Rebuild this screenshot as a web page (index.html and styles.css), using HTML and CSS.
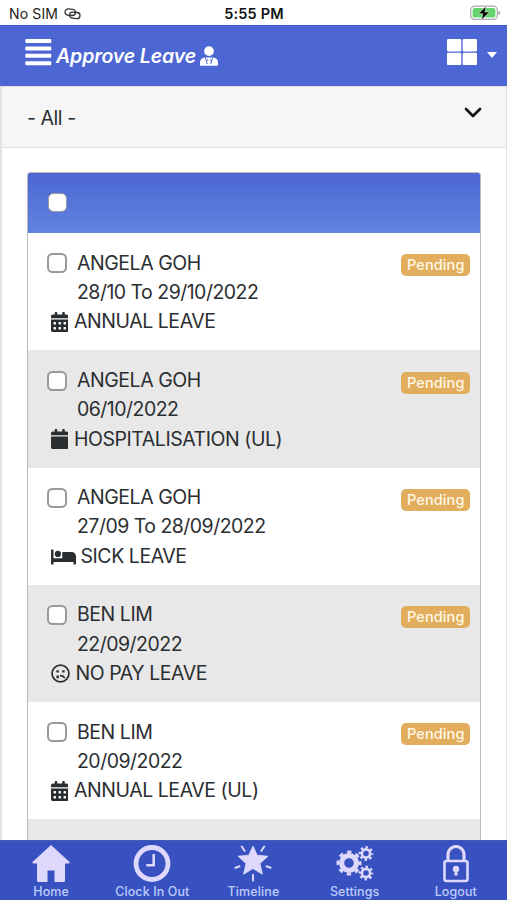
FILE: index.html
```html
<!DOCTYPE html>
<html lang="en">
<head>
<meta charset="utf-8">
<title>Approve Leave</title>
<link rel="stylesheet" href="styles.css">
</head>
<body>
<svg class="defs" aria-hidden="true">
  <symbol id="cal" viewBox="0 0 448 512"><path d="M0 464c0 26 22 48 48 48h352c26 0 48-22 48-48V192H0zm320-196q0-12 12-12h40q12 0 12 12v40q0 12-12 12h-40q-12 0-12-12zm0 128q0-12 12-12h40q12 0 12 12v40q0 12-12 12h-40q-12 0-12-12zM192 268q0-12 12-12h40q12 0 12 12v40q0 12-12 12h-40q-12 0-12-12zm0 128q0-12 12-12h40q12 0 12 12v40q0 12-12 12h-40q-12 0-12-12zM64 268q0-12 12-12h40q12 0 12 12v40q0 12-12 12H76q-12 0-12-12zm0 128q0-12 12-12h40q12 0 12 12v40q0 12-12 12H76q-12 0-12-12zM400 64h-48V16c0-9-7-16-16-16h-32c-9 0-16 7-16 16v48H160V16c0-9-7-16-16-16h-32c-9 0-16 7-16 16v48H48C22 64 0 86 0 112v48h448v-48c0-26-22-48-48-48z" fill-rule="evenodd"/></symbol>
  <symbol id="calsolid" viewBox="0 0 448 512"><path d="M12 192h424q12 0 12 12v260c0 26-22 48-48 48H48c-26 0-48-22-48-48V204q0-12 12-12zm436-44v-36c0-26-22-48-48-48h-48V12q0-12-12-12h-40q-12 0-12 12v52H160V12q0-12-12-12h-40q-12 0-12 12v52H48C22 64 0 86 0 112v36q0 12 12 12h424q12 0 12-12z"/></symbol>
  <symbol id="bed" viewBox="0 0 640 512"><path d="M176 256a80 80 0 1 0 0-160 80 80 0 0 0 0 160zm352-128H304c-9 0-16 7-16 16v144H64V80c0-9-7-16-16-16H16C7 64 0 71 0 80v352c0 9 7 16 16 16h32c9 0 16-7 16-16v-48h512v48c0 9 7 16 16 16h32c9 0 16-7 16-16V240c0-62-50-112-112-112z"/></symbol>
  <symbol id="sad" viewBox="0 0 20 20"><circle cx="10" cy="10" r="8.9" fill="none" stroke="currentColor" stroke-width="1.8"/><path d="M5.7 6.500h2.500V9H5.700zM11.800 6.500h2.500V9h-2.500zM5.700 12h2.600v3H5.700z"/><path d="M9.500 12.500q3-.8 4.900 2.400" fill="none" stroke="currentColor" stroke-width="1.800"/></symbol>
</svg>
<div class="status">
  <span class="carrier">No SIM
    <svg width="17" height="12" viewBox="0 0 17 12" fill="none" stroke="#333" stroke-width="1.300"><rect x="1" y="1.100" width="10.500" height="6.200" rx="3.100" transform="rotate(5 6 4)"/><rect x="5.600" y="4.300" width="10.400" height="6.100" rx="3" transform="rotate(5 11 7)"/></svg>
  </span>
  <span class="time">5:55 PM</span>
  <svg class="battery" width="31" height="16" viewBox="0 0 31 16"><rect x=".7" y="1.200" width="26.600" height="13.200" rx="4" fill="#fff" stroke="#aaa" stroke-width="1.200"/><rect x="2.600" y="3" width="22.800" height="9.600" rx="2.200" fill="#65d36e"/><path d="M28.500 5.700q1.800.5 1.800 2.200t-1.800 2.200z" fill="#aaa"/><path d="M16.300 1 8.500 8.700h4.300L11.400 15l8-8h-4.600z" fill="#000" stroke="#fff" stroke-width=".5"/></svg>
</div>
<header class="topbar">
  <svg width="27" height="27" viewBox="0 0 27 27" fill="#fff"><rect x=".3" width="26" height="4" rx="1"/><rect x=".3" y="7.400" width="26" height="4" rx="1"/><rect x=".3" y="14.800" width="26" height="4" rx="1"/><rect x=".3" y="22.200" width="26" height="4" rx="1"/></svg>
  <h1>Approve Leave</h1>
  <svg class="person" width="18" height="21" viewBox="0 0 18 21" fill="#fff"><circle cx="9" cy="5.100" r="4.900"/><path d="M0 19v-2.500C0 13.500 2 12 5 11.500h8c3 .5 5 2 5 5V19q0 .8-.8.800H.8Q0 19.800 0 19z"/><path d="M5.400 11.500 7.200 18M12.600 11.500 10.800 18" fill="none" stroke="#4c66d4" stroke-width="1"/><path d="m7.200 13.200.7 1.800M10.800 13.200l-.7 1.800" stroke="#4c66d4" stroke-width=".8"/></svg>
  <svg class="grid" width="30" height="27" viewBox="0 0 30 27" fill="#fff"><rect width="14.300" height="12.400" rx="1.200"/><rect x="15.700" width="14.300" height="12.400" rx="1.200"/><rect y="13.700" width="14.300" height="12.400" rx="1.200"/><rect x="15.700" y="13.700" width="14.300" height="12.400" rx="1.200"/></svg>
  <span class="caret"></span>
</header>
<main>
  <div class="filter"><span>- All -</span><svg width="18" height="12" viewBox="0 0 18 12" fill="none" stroke="#111" stroke-width="2.700" stroke-linecap="round" stroke-linejoin="round"><path d="m2 2 7 7 7-7"/></svg></div>
  <section class="table">
    <div class="thead"><span class="check"></span></div>
    <article class="row"><span class="check"></span><div class="who"><p>ANGELA GOH</p><p class="date">28/10 To 29/10/2022</p></div><span class="badge">Pending</span><p class="type"><svg class="cal"><use href="#cal"/></svg><span>ANNUAL LEAVE</span></p></article>
    <article class="row"><span class="check"></span><div class="who"><p>ANGELA GOH</p><p class="date">06/10/2022</p></div><span class="badge">Pending</span><p class="type"><svg class="cal"><use href="#calsolid"/></svg><span>HOSPITALISATION (UL)</span></p></article>
    <article class="row"><span class="check"></span><div class="who"><p>ANGELA GOH</p><p class="date">27/09 To 28/09/2022</p></div><span class="badge">Pending</span><p class="type"><svg class="bed"><use href="#bed"/></svg><span>SICK LEAVE</span></p></article>
    <article class="row"><span class="check"></span><div class="who"><p>BEN LIM</p><p class="date">22/09/2022</p></div><span class="badge">Pending</span><p class="type"><svg class="sad"><use href="#sad"/></svg><span>NO PAY LEAVE</span></p></article>
    <article class="row"><span class="check"></span><div class="who"><p>BEN LIM</p><p class="date">20/09/2022</p></div><span class="badge">Pending</span><p class="type"><svg class="cal"><use href="#cal"/></svg><span>ANNUAL LEAVE (UL)</span></p></article>
    <article class="row"></article>
  </section>
</main>
<nav class="tabs">
  <a><svg viewBox="0 0 38 38"><path d="M19 0 .5 17q-.8 1.500 1.200 1.500H5V35.500q0 1.500 1.500 1.500h9V25.500h7V37h9q1.500 0 1.500-1.500v-17h3.300q2 0 1.200-1.500z"/></svg><span>Home</span></a>
  <a><svg viewBox="0 0 38 38"><circle cx="19" cy="18.500" r="16" fill="none" stroke="currentColor" stroke-width="4.800"/><path d="M20.700 9v11.200h-7.500" fill="none" stroke="currentColor" stroke-width="2.600"/></svg><span>Clock In Out</span></a>
  <a><svg viewBox="0 0 38 38"><path d="m19 1 4.200 9.200 10.800 1-8 7.200 2.400 10.800L19 23.600l-9.400 5.600L12 18.400l-8-7.200 10.800-1z" stroke="currentColor" stroke-width=".8" stroke-linejoin="round"/><path d="m7.800 1.500 2.800 4.300M30.200 1.500l-2.800 4.300M1.500 22.800l4-1.500M36.500 22.800l-4-1.500M19 30v5.600" stroke="currentColor" stroke-width="2" stroke-linecap="round"/></svg><span>Timeline</span></a>
  <a><svg viewBox="0 0 38 38"><g fill="none" stroke="currentColor"><circle cx="13" cy="18" r="7.400" stroke-width="5.200"/><circle cx="13" cy="18" r="11" stroke-width="3" stroke-dasharray="4.320 4.320" stroke-dashoffset="2.160"/><circle cx="30" cy="8.500" r="4.100" stroke-width="2.600"/><circle cx="30" cy="8.500" r="6.200" stroke-width="2.400" stroke-dasharray="2.435 2.435" stroke-dashoffset="1.217"/><circle cx="30" cy="28" r="4.100" stroke-width="2.600"/><circle cx="30" cy="28" r="6.200" stroke-width="2.400" stroke-dasharray="2.435 2.435" stroke-dashoffset="1.217"/></g></svg><span>Settings</span></a>
  <a><svg viewBox="0 0 38 38"><rect x="7.500" y="16" width="23" height="20" rx="2" fill="none" stroke="currentColor" stroke-width="2.600"/><path d="M11 16V9.500a8 8 0 0 1 16 0V16" fill="none" stroke="currentColor" stroke-width="3.200"/><circle cx="19" cy="24" r="3.200"/><path d="m18 25-.8 5.500h3.600L20 25z"/></svg><span>Logout</span></a>
</nav>
</body>
</html>
```
FILE: styles.css
```css
* { box-sizing: border-box; }
body { margin: 0; height: 900px; display: flex; flex-direction: column; overflow: hidden; background: #fff; color: #2b2e31; font: 19.500px/29.300px Inter, sans-serif; letter-spacing: -.45px; }
p, h1 { margin: 0; }
svg { display: block; flex: none; }
.defs { position: absolute; width: 0; height: 0; }
.status { height: 25px; flex: none; display: grid; grid-template-columns: 1fr auto 1fr; align-items: center; padding: 2px 6px 0 9px; font-size: 14px; line-height: 23px; letter-spacing: .15px; color: #222; }
.carrier { display: flex; align-items: center; gap: 6px; }
.time { margin-left: -2px; font-weight: 600; color: #111; font-size: 14.500px; }
.battery { justify-self: end; margin-top: -1px; }
.topbar { height: 61px; flex: none; display: flex; align-items: flex-start; padding: 13px 10px 0 25px; background: #4c66d4; border-top: 1px solid #3e5acb; color: #fff; }
.topbar h1 { font: italic 600 19.500px/30px Inter, sans-serif; letter-spacing: -.12px; margin: 2px 0 0 4px; white-space: nowrap; }
.person { margin: 7px 0 0 4px; }
.grid { margin-left: auto; }
.caret { margin: 13px 0 0 10px; border: 5.500px solid transparent; border-top: 6px solid #fff; border-bottom: 0; }
main { flex: 1; min-height: 0; overflow: hidden; border: solid #e2e2e2; border-width: 0 1px 0 2px; }
.filter { height: 62px; display: flex; justify-content: space-between; padding: 17px 24px 0 25px; background: #f6f6f6; border: solid #e2e2e2; border-width: 1px 0; }
.filter svg { margin-top: 3px; }
.table { margin: 24px 25px 0; width: 454px; border: 1px solid #b9b9b9; border-radius: 3px 3px 0 0; }
.thead { height: 60px; padding: 20px; border-radius: 2px 2px 0 0; background: linear-gradient(#4c66d4, #6283df); }
.check { width: 20px; height: 20px; flex: none; display: block; border: 2px solid #999; border-radius: 5.500px; background: #fff; }
.thead .check { width: 19px; height: 19px; border-width: 1px; }
.row { height: 117.300px; display: grid; grid-template-columns: 20px 1fr auto; grid-template-rows: 59px 29.300px; align-content: start; column-gap: 10px; padding: 15.300px 10px 0 19px; }
.row:nth-child(odd) { background: #e8e8e8; }
.row .check { margin-top: 5px; }
.who { padding-top: .3px; }
.date { letter-spacing: -.52px; }
.badge { align-self: start; margin-top: 6px; padding: 0 6px; width: 69px; height: 22px; border-radius: 5px; background: #e2ad5c; color: #fff8e8; font-weight: 500; font-size: 14.500px; line-height: 22px; letter-spacing: .1px; }
.type { grid-column: 1 / -1; display: flex; align-items: center; padding-left: 3.500px; white-space: nowrap; }
.type svg { fill: currentColor; }
.cal { width: 17.500px; height: 20px; margin-right: 6px; }
.bed { width: 25px; height: 20px; margin-right: 5px; }
.sad { width: 19px; height: 19px; margin-right: 6px; }
.tabs { height: 60px; flex: none; display: grid; grid-template-columns: repeat(5, 101.200px); padding-left: .5px; background: #3851c1; border-top: 1px solid #4259b5; color: #ded8fc; letter-spacing: .1px; }
.tabs a { display: flex; flex-direction: column; align-items: center; padding-top: 4px; font-size: 12.500px; font-weight: 500; line-height: 17px; }
.tabs svg { width: 38px; height: 38px; fill: currentColor; }
.tabs span { color: #bfcbfa; }
```
